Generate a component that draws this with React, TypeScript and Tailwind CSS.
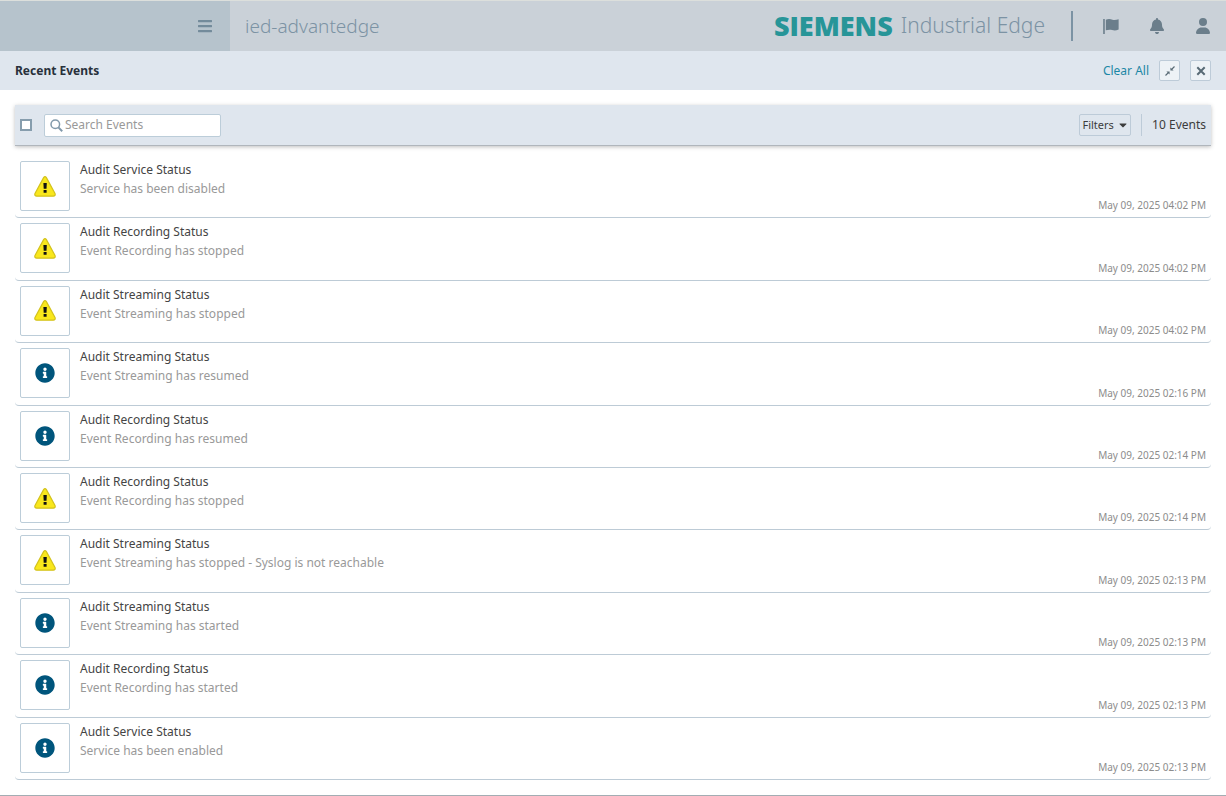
import React, { useState } from 'react';
import { FaBars, FaCaretDown, FaInfoCircle } from 'react-icons/fa';
import { FaBell, FaUser } from 'react-icons/fa6';

type EventLevel = 'warning' | 'info';

interface EdgeEvent {
  id: number;
  level: EventLevel;
  title: string;
  message: string;
  date: string;
}

const EVENTS: EdgeEvent[] = [
  { id: 1, level: 'warning', title: 'Audit Service Status', message: 'Service has been disabled', date: 'May 09, 2025 04:02 PM' },
  { id: 2, level: 'warning', title: 'Audit Recording Status', message: 'Event Recording has stopped', date: 'May 09, 2025 04:02 PM' },
  { id: 3, level: 'warning', title: 'Audit Streaming Status', message: 'Event Streaming has stopped', date: 'May 09, 2025 04:02 PM' },
  { id: 4, level: 'info', title: 'Audit Streaming Status', message: 'Event Streaming has resumed', date: 'May 09, 2025 02:16 PM' },
  { id: 5, level: 'info', title: 'Audit Recording Status', message: 'Event Recording has resumed', date: 'May 09, 2025 02:14 PM' },
  { id: 6, level: 'warning', title: 'Audit Recording Status', message: 'Event Recording has stopped', date: 'May 09, 2025 02:14 PM' },
  { id: 7, level: 'warning', title: 'Audit Streaming Status', message: 'Event Streaming has stopped - Syslog is not reachable', date: 'May 09, 2025 02:13 PM' },
  { id: 8, level: 'info', title: 'Audit Streaming Status', message: 'Event Streaming has started', date: 'May 09, 2025 02:13 PM' },
  { id: 9, level: 'info', title: 'Audit Recording Status', message: 'Event Recording has started', date: 'May 09, 2025 02:13 PM' },
  { id: 10, level: 'info', title: 'Audit Service Status', message: 'Service has been enabled', date: 'May 09, 2025 02:13 PM' },
];

function WarningIcon() {
  return (
    <svg viewBox="0 0 22 21" className="w-[22px] h-[21px]" aria-hidden="true">
      <path
        d="M9.6 1.6 Q11 -0.3 12.4 1.6 L21 17.4 Q21.8 20 19.2 20.2 H2.8 Q0.2 20 1 17.4 Z"
        fill="#f9e71c"
        stroke="#d3c21c"
        strokeWidth="1.2"
      />
      <path d="M9.4 7 H12.8 L12.5 12.8 H9.7 Z M9.6 14 H12.6 V16.8 H9.6 Z" fill="#111" />
    </svg>
  );
}

function FlagIcon() {
  return (
    <svg viewBox="0 0 17 17" className="w-4 h-[17px]" fill="currentColor" aria-hidden="true">
      <path d="M0.2 0.6 H1.9 V16.4 H0.2 Z" />
      <path d="M3 1.2 C6 0.2 8 0.6 10 1.3 C12.4 2 14.4 1.4 16.6 0.8 V11.6 C14 12.8 12 12.9 9.6 12.2 C7.2 11.5 5.2 11.9 3 12.5 Z" />
    </svg>
  );
}

function ShrinkIcon() {
  return (
    <svg viewBox="0 0 10 10" className="w-[10px] h-[10px]" aria-hidden="true">
      <path d="M9.5 0.5 L6.5 3.5 M0.5 9.5 L3.5 6.5" stroke="currentColor" strokeWidth="1.2" />
      <path d="M5.4 1.4 V4.6 H8.6 Z M1.4 5.4 H4.6 V8.6 Z" fill="currentColor" />
    </svg>
  );
}

function CloseIcon() {
  return (
    <svg viewBox="0 0 10 10" className="w-[10px] h-[10px]" aria-hidden="true">
      <path d="M1.3 1.3 L8.7 8.7 M8.7 1.3 L1.3 8.7" stroke="currentColor" strokeWidth="2" />
    </svg>
  );
}

function SearchIcon() {
  return (
    <svg viewBox="0 0 13 13" className="w-[13px] h-[13px] shrink-0" fill="none" stroke="#8199aa" aria-hidden="true">
      <circle cx="5.3" cy="5.3" r="4.3" strokeWidth="1.5" />
      <path d="M8.4 8.4 L12.2 12.2" strokeWidth="2" />
    </svg>
  );
}

function EventRow({ event }: { event: EdgeEvent }) {
  return (
    <li className="flex border-b border-[#bdcbd6] rounded px-[5px] pt-[5px]">
      <div className="w-[50px] h-[50px] shrink-0 border border-[#bccdd9] rounded-xs flex items-center justify-center">
        {event.level === 'warning' ? <WarningIcon /> : <FaInfoCircle className="w-5 h-5 text-[#00557c]" />}
      </div>
      <div className="pl-2.5 flex-1 text-xs">
        <h3 className="leading-[18px] text-[#444]">{event.title}</h3>
        <p className="leading-[19px] text-[#999]">{event.message}</p>
      </div>
      <time className="self-end pb-[5px] text-[10px] leading-[14px] text-[#8c8c8c]">{event.date}</time>
    </li>
  );
}

export default function App() {
  const [search, setSearch] = useState('');
  const [allChecked, setAllChecked] = useState(false);

  const visibleEvents = EVENTS.filter((e) =>
    `${e.title} ${e.message}`.toLowerCase().includes(search.toLowerCase())
  );

  return (
    <div className="min-h-screen flex flex-col bg-white border-b border-[#a3adb3] font-['Noto_Sans',sans-serif]">
      {/* App header */}
      <header className="h-[51px] flex border-t border-[#dcdfdc] bg-[#cad1d8] text-[#7c93a4]">
        <div className="w-[230px] flex items-center justify-end pr-[17px] bg-[#b6c3cc]">
          <button type="button" aria-label="Toggle menu">
            <FaBars className="w-4 h-4 text-[#738b9b]" />
          </button>
        </div>
        <div className="flex-1 flex items-center justify-between px-[15px]">
          <h1 className="text-[19px] font-light">ied-advantedge</h1>
          <div className="flex items-center">
            <span className="text-[27px] leading-[50px] font-extrabold font-['Open_Sans',sans-serif] text-[#279598]">SIEMENS</span>
            <span className="pl-2 text-[21px] font-light">Industrial Edge</span>
            <span className="ml-[26px] w-0.5 h-[30px] bg-[#7c93a4]" />
            <div className="ml-[30px] flex items-center gap-[30px] text-[#6b7e8b]">
              <button type="button" aria-label="Flags"><FlagIcon /></button>
              <button type="button" aria-label="Notifications"><FaBell className="w-4 h-4" /></button>
              <button type="button" aria-label="Account"><FaUser className="w-4 h-4" /></button>
            </div>
          </div>
        </div>
      </header>

      {/* Title bar */}
      <div className="h-[39px] flex items-center justify-between px-[15px] bg-[#dfe6ee]">
        <h2 className="text-xs font-bold text-[#28303b]">Recent Events</h2>
        <div className="flex items-center text-[#586a75]">
          <button type="button" className="text-xs text-[#1c87a5]">Clear All</button>
          <button type="button" aria-label="Shrink" className="ml-2.5 w-[21px] h-[21px] flex items-center justify-center border border-[#bdcbd8] rounded-xs bg-[#edf2f6]">
            <ShrinkIcon />
          </button>
          <button type="button" aria-label="Close" className="ml-2.5 w-[21px] h-[21px] flex items-center justify-center border border-[#bdcbd8] rounded-xs bg-[#edf2f6]">
            <CloseIcon />
          </button>
        </div>
      </div>

      <main className="p-[15px]">
        {/* Toolbar */}
        <div className="h-[41px] flex items-center justify-between px-[5px] bg-[#dfe6ee] border-b border-[#b0b6bc] shadow-[0_1px_4px_rgba(0,0,0,0.25)]">
          <div className="flex items-center">
            <input
              type="checkbox"
              aria-label="Select all events"
              checked={allChecked}
              onChange={(e) => setAllChecked(e.target.checked)}
              className="appearance-none w-3 h-3 border-2 border-[#869dad] bg-white checked:bg-[#869dad]"
            />
            <label className="ml-3 w-[177px] h-[23px] pl-[5px] flex items-center gap-0.5 bg-white border border-[#bccdd9] rounded-xs">
              <SearchIcon />
              <input
                type="text"
                value={search}
                onChange={(e) => setSearch(e.target.value)}
                placeholder="Search Events"
                aria-label="Search events"
                className="w-full min-w-0 text-xs leading-[18px] text-[#444] placeholder:text-[#999] outline-none"
              />
            </label>
          </div>
          <div className="flex items-center text-[#3c3c3c]">
            <button type="button" className="w-[52px] h-[22px] flex items-center justify-center gap-1 border border-[#bdcbd8] rounded-xs text-[11px]">
              Filters
              <FaCaretDown className="w-2.5 h-3 shrink-0" />
            </button>
            <span className="ml-2.5 w-px h-[22px] bg-[#bdcbd8]" />
            <span className="pl-2.5 text-xs">{visibleEvents.length} Events</span>
          </div>
        </div>

        {/* Event list */}
        <ul className="mt-2.5 h-[624px] grid grid-rows-10">
          {visibleEvents.map((event) => (
            <EventRow key={event.id} event={event} />
          ))}
        </ul>
      </main>
    </div>
  );
}
